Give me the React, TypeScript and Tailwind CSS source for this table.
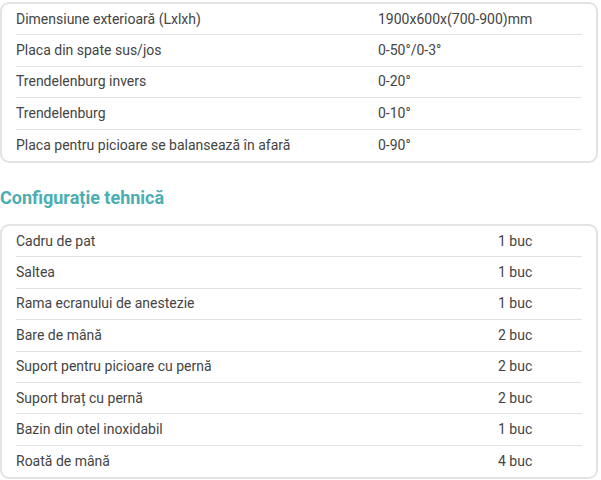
const specs: [string, string][] = [
  ["Dimensiune exterioară (Lxlxh)", "1900x600x(700-900)mm"],
  ["Placa din spate sus/jos", "0-50°/0-3°"],
  ["Trendelenburg invers", "0-20°"],
  ["Trendelenburg", "0-10°"],
  ["Placa pentru picioare se balansează în afară", "0-90°"],
];

const config: [string, string][] = [
  ["Cadru de pat", "1 buc"],
  ["Saltea", "1 buc"],
  ["Rama ecranului de anestezie", "1 buc"],
  ["Bare de mână", "2 buc"],
  ["Suport pentru picioare cu pernă", "2 buc"],
  ["Suport braț cu pernă", "2 buc"],
  ["Bazin din otel inoxidabil", "1 buc"],
  ["Roată de mână", "4 buc"],
];

function SpecTable({ rows, labelWidth }: { rows: [string, string][]; labelWidth: string }) {
  return (
    <div className="rounded-[9px] border-2 border-[#e3e3e3] bg-white px-[14px]">
      {rows.map(([label, value], i) => (
        <div
          key={label}
          className={`flex h-[31.4px] items-center text-[14px] text-[#444] ${
            i < rows.length - 1 ? "border-b border-[#e2e2e2]" : ""
          }`}
        >
          <div className={labelWidth}>{label}</div>
          <div>{value}</div>
        </div>
      ))}
    </div>
  );
}

export default function App() {
  return (
    <div className="w-[601px] bg-white pt-[2px] pr-[3px]" style={{ fontFamily: "Roboto, sans-serif" }}>
      <SpecTable rows={specs} labelWidth="w-[362px]" />
      <h3 className="mt-[23px] mb-[14px] text-[18px] font-bold leading-[24px] text-[#4aaeb2]">
        Configurație tehnică
      </h3>
      <SpecTable rows={config} labelWidth="w-[482px]" />
    </div>
  );
}
